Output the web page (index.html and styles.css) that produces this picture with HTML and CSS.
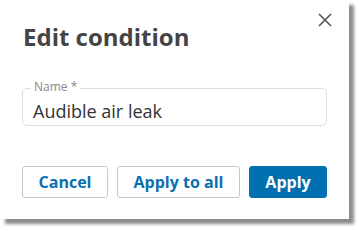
FILE: index.html
```html
<!DOCTYPE html>
<html>
<head>
<meta charset="utf-8">
<link rel="stylesheet" href="styles.css">
</head>
<body>
<div class="dialog">
  <div class="header">
    <h1 class="title">Edit condition</h1>
    <button class="close" aria-label="Close">
      <svg width="14" height="14" viewBox="0 0 14 14"><path d="M1 1L13 13M13 1L1 13" stroke="#555" stroke-width="1.6" fill="none"/></svg>
    </button>
  </div>
  <div class="field">
    <span class="label">Name *</span>
    <div class="value">Audible air leak</div>
  </div>
  <div class="actions">
    <button class="btn cancel">Cancel</button>
    <button class="btn apply-all">Apply to all</button>
    <button class="btn primary">Apply</button>
  </div>
</div>
</body>
</html>
```
FILE: styles.css
```css
html, body { margin: 0; padding: 0; background: #fff; }
body { font-family: "Open Sans", "Noto Sans", sans-serif; width: 359px; height: 229px; overflow: hidden; }
.dialog {
  width: 349px;
  height: 219px;
  background: #fff;
  box-shadow: 5px 5px 3px rgba(0,0,0,0.45);
  box-sizing: border-box;
  padding: 0 22px 0 22px;
}
.header { display: flex; justify-content: space-between; align-items: flex-start; padding-top: 22px; height: 64px; box-sizing: border-box; }
.title { margin: 0 0 0 1px; font-size: 24px; font-weight: 700; color: #444; line-height: 30px; }
.close { border: 0; background: none; padding: 0; margin: -9px -5px 0 0; width: 14px; height: 14px; display: flex; }
.field { position: relative; margin-top: 24px; border: 1px solid #dedede; border-radius: 5px; height: 38px; box-sizing: border-box; padding: 10px 10px 0; }
.label { position: absolute; top: -9px; left: 8px; background: #fff; padding: 0 3px; font-size: 12px; line-height: 14px; color: #888; }
.value { font-size: 18px; color: #333; line-height: normal; }
.actions { display: flex; gap: 9px; margin-top: 40px; }
.btn { font-family: inherit; font-size: 16px; font-weight: 700; color: #0b70b0; background: #fff; border: 1px solid #c8c8c8; border-radius: 3px; height: 32px; padding: 0; line-height: 1; white-space: nowrap; text-align: center; flex: none; }
.cancel { width: 86px; }
.apply-all { width: 123px; }
.btn.primary { width: 78px; background: #0070b0; border-color: #0070b0; color: #fff; }
```
